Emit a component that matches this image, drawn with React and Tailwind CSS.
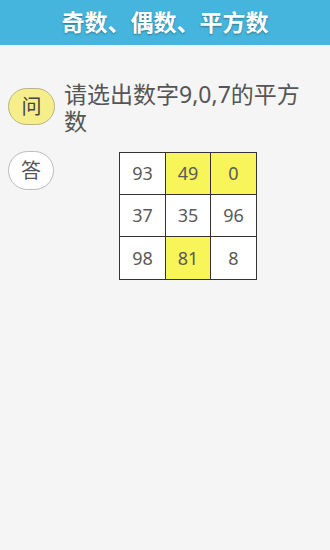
import React from 'react';

const cells = [
  { n: '93', on: false },
  { n: '49', on: true },
  { n: '0', on: true },
  { n: '37', on: false },
  { n: '35', on: false },
  { n: '96', on: false },
  { n: '98', on: false },
  { n: '81', on: true },
  { n: '8', on: false },
];

export default function App() {
  return (
    <div
      className="w-[330px] h-[550px] bg-[#f5f5f5] overflow-hidden"
      style={{ fontFamily: '"Noto Sans", "Noto Sans CJK SC", sans-serif' }}
    >
      {/* 标题栏 */}
      <header className="h-[45px] bg-[#45b5dd] flex items-center justify-center">
        <h1 className="text-white text-[23px] font-bold leading-none [text-shadow:0_1px_2px_rgba(0,0,0,0.35)]">
          奇数、偶数、平方数
        </h1>
      </header>

      {/* 问题 */}
      <div className="flex items-start pt-[36px] pl-[8px] pr-[16px] h-[106px]">
        <div className="w-[47px] h-[37px] mt-[7px] shrink-0 rounded-full bg-[#f5ee8a] border border-[#b8b48a] flex items-center justify-center text-[20px] text-[#444]">
          问
        </div>
        <p className="ml-[9px] text-[23px] leading-[27px] text-[#555]">
          请选出数字9,0,7的平方数
        </p>
      </div>

      {/* 答案 */}
      <div className="flex items-start pl-[8px]">
        <div className="w-[46px] h-[39px] shrink-0 rounded-full bg-white border border-[#bbb] flex items-center justify-center text-[20px] text-[#555]">
          答
        </div>
        <div className="ml-[65px] mt-[1px] grid grid-cols-[46px_45px_46px] grid-rows-[42px_42px_43px] border-l border-t border-[#333]">
          {cells.map((c, i) => (
            <div
              key={i}
              className={`border-r border-b border-[#333] flex items-center justify-center text-[18px] text-[#5a5a5a] ${
                c.on ? 'bg-[#f7f55a]' : 'bg-white'
              }`}
            >
              {c.n}
            </div>
          ))}
        </div>
      </div>
    </div>
  );
}
